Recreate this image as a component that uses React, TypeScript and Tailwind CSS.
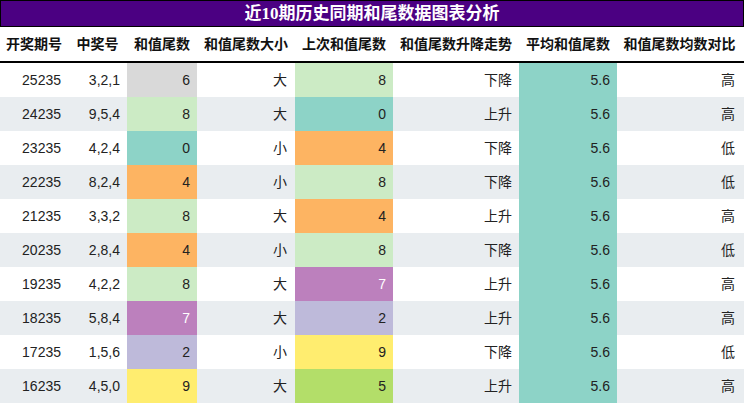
const cols = 'grid grid-cols-[68px_59px_70px_98px_98px_126px_98px_125px]';

const colors: Record<number, string> = {
  0: 'bg-[#8dd3c7]',
  2: 'bg-[#bebada]',
  4: 'bg-[#fdb462]',
  5: 'bg-[#b3de69]',
  6: 'bg-[#d9d9d9]',
  7: 'bg-[#bc80bd] text-white',
  8: 'bg-[#ccebc5]',
  9: 'bg-[#ffed6f]',
};

const headers = ['开奖期号', '中奖号', '和值尾数', '和值尾数大小', '上次和值尾数', '和值尾数升降走势', '平均和值尾数', '和值尾数均数对比'];

const rows: [string, string, number, string, number, string, string][] = [
  ['25235', '3,2,1', 6, '大', 8, '下降', '高'],
  ['24235', '9,5,4', 8, '大', 0, '上升', '高'],
  ['23235', '4,2,4', 0, '小', 4, '下降', '低'],
  ['22235', '8,2,4', 4, '小', 8, '下降', '低'],
  ['21235', '3,3,2', 8, '大', 4, '上升', '高'],
  ['20235', '2,8,4', 4, '小', 8, '下降', '低'],
  ['19235', '4,2,2', 8, '大', 7, '上升', '高'],
  ['18235', '5,8,4', 7, '大', 2, '上升', '高'],
  ['17235', '1,5,6', 2, '小', 9, '下降', '低'],
  ['16235', '4,5,0', 9, '大', 5, '上升', '高'],
];

function Cell({ children, className = '' }: { children: React.ReactNode; className?: string }) {
  return <div className={`flex items-center justify-end pr-[7px] ${className}`}>{children}</div>;
}

export default function App() {
  return (
    <div className="w-[744px] h-[404px] bg-white text-[#222] font-['Liberation_Sans','Noto_Sans_CJK_SC',sans-serif] overflow-hidden">
      <div className="h-[27px] border border-black bg-[#4b0082] text-white text-[17px] font-bold flex items-center justify-center">
        近<span className="font-['Liberation_Serif','Noto_Sans_CJK_SC',serif]">10</span>期历史同期和尾数据图表分析
      </div>
      <div className={`${cols} h-[36px] border-b-2 border-black text-[14px] font-bold text-[#111]`}>
        {headers.map((h) => (
          <div key={h} className="flex items-center justify-center">{h}</div>
        ))}
      </div>
      {rows.map((r, i) => (
        <div key={r[0]} className={`${cols} h-[34px] text-[14px] ${i % 2 ? 'bg-[#e9edf0]' : 'bg-white'}`}>
          <Cell>{r[0]}</Cell>
          <Cell>{r[1]}</Cell>
          <Cell className={colors[r[2]]}>{r[2]}</Cell>
          <Cell className="pr-[8px]">{r[3]}</Cell>
          <Cell className={colors[r[4]]}>{r[4]}</Cell>
          <Cell>{r[5]}</Cell>
          <Cell className="bg-[#8dd3c7]">5.6</Cell>
          <Cell>{r[6]}</Cell>
        </div>
      ))}
    </div>
  );
}
